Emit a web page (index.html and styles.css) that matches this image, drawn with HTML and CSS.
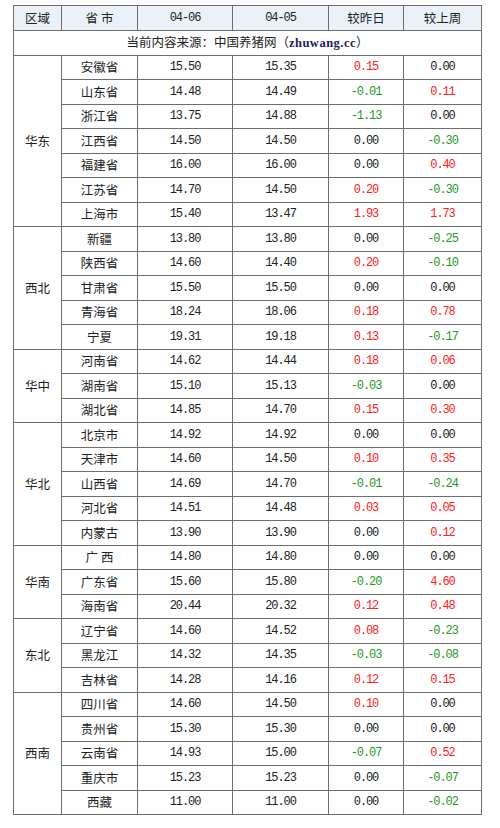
FILE: index.html
```html
<!DOCTYPE html>
<html lang="zh">
<head>
<meta charset="utf-8">
<link rel="stylesheet" href="styles.css">
</head>
<body>
<table class="price">
  <colgroup>
    <col class="c-region"><col class="c-prov"><col class="c-d1"><col class="c-d2"><col class="c-day"><col class="c-week">
  </colgroup>
  <thead>
    <tr class="head">
      <th class="zh">区域</th><th class="zh">省 市</th><th class="num">04-06</th><th class="num">04-05</th><th class="zh">较昨日</th><th class="zh">较上周</th>
    </tr>
  </thead>
  <tbody>
    <tr><td colspan="6" class="source zh">当前内容来源：中国养猪网（<b class="site">zhuwang.cc</b>）</td></tr>

    <tr><td rowspan="7" class="zh region">华东</td><td class="zh">安徽省</td><td class="num">15.50</td><td class="num">15.35</td><td class="num up">0.15</td><td class="num">0.00</td></tr>
    <tr><td class="zh">山东省</td><td class="num">14.48</td><td class="num">14.49</td><td class="num dn">-0.01</td><td class="num up">0.11</td></tr>
    <tr><td class="zh">浙江省</td><td class="num">13.75</td><td class="num">14.88</td><td class="num dn">-1.13</td><td class="num">0.00</td></tr>
    <tr><td class="zh">江西省</td><td class="num">14.50</td><td class="num">14.50</td><td class="num">0.00</td><td class="num dn">-0.30</td></tr>
    <tr><td class="zh">福建省</td><td class="num">16.00</td><td class="num">16.00</td><td class="num">0.00</td><td class="num up">0.40</td></tr>
    <tr><td class="zh">江苏省</td><td class="num">14.70</td><td class="num">14.50</td><td class="num up">0.20</td><td class="num dn">-0.30</td></tr>
    <tr><td class="zh">上海市</td><td class="num">15.40</td><td class="num">13.47</td><td class="num up">1.93</td><td class="num up">1.73</td></tr>

    <tr><td rowspan="5" class="zh region">西北</td><td class="zh">新疆</td><td class="num">13.80</td><td class="num">13.80</td><td class="num">0.00</td><td class="num dn">-0.25</td></tr>
    <tr><td class="zh">陕西省</td><td class="num">14.60</td><td class="num">14.40</td><td class="num up">0.20</td><td class="num dn">-0.10</td></tr>
    <tr><td class="zh">甘肃省</td><td class="num">15.50</td><td class="num">15.50</td><td class="num">0.00</td><td class="num">0.00</td></tr>
    <tr><td class="zh">青海省</td><td class="num">18.24</td><td class="num">18.06</td><td class="num up">0.18</td><td class="num up">0.78</td></tr>
    <tr><td class="zh">宁夏</td><td class="num">19.31</td><td class="num">19.18</td><td class="num up">0.13</td><td class="num dn">-0.17</td></tr>

    <tr><td rowspan="3" class="zh region">华中</td><td class="zh">河南省</td><td class="num">14.62</td><td class="num">14.44</td><td class="num up">0.18</td><td class="num up">0.06</td></tr>
    <tr><td class="zh">湖南省</td><td class="num">15.10</td><td class="num">15.13</td><td class="num dn">-0.03</td><td class="num">0.00</td></tr>
    <tr><td class="zh">湖北省</td><td class="num">14.85</td><td class="num">14.70</td><td class="num up">0.15</td><td class="num up">0.30</td></tr>

    <tr><td rowspan="5" class="zh region">华北</td><td class="zh">北京市</td><td class="num">14.92</td><td class="num">14.92</td><td class="num">0.00</td><td class="num">0.00</td></tr>
    <tr><td class="zh">天津市</td><td class="num">14.60</td><td class="num">14.50</td><td class="num up">0.10</td><td class="num up">0.35</td></tr>
    <tr><td class="zh">山西省</td><td class="num">14.69</td><td class="num">14.70</td><td class="num dn">-0.01</td><td class="num dn">-0.24</td></tr>
    <tr><td class="zh">河北省</td><td class="num">14.51</td><td class="num">14.48</td><td class="num up">0.03</td><td class="num up">0.05</td></tr>
    <tr><td class="zh">内蒙古</td><td class="num">13.90</td><td class="num">13.90</td><td class="num">0.00</td><td class="num up">0.12</td></tr>

    <tr><td rowspan="3" class="zh region">华南</td><td class="zh">广 西</td><td class="num">14.80</td><td class="num">14.80</td><td class="num">0.00</td><td class="num">0.00</td></tr>
    <tr><td class="zh">广东省</td><td class="num">15.60</td><td class="num">15.80</td><td class="num dn">-0.20</td><td class="num up">4.60</td></tr>
    <tr><td class="zh">海南省</td><td class="num">20.44</td><td class="num">20.32</td><td class="num up">0.12</td><td class="num up">0.48</td></tr>

    <tr><td rowspan="3" class="zh region">东北</td><td class="zh">辽宁省</td><td class="num">14.60</td><td class="num">14.52</td><td class="num up">0.08</td><td class="num dn">-0.23</td></tr>
    <tr><td class="zh">黑龙江</td><td class="num">14.32</td><td class="num">14.35</td><td class="num dn">-0.03</td><td class="num dn">-0.08</td></tr>
    <tr><td class="zh">吉林省</td><td class="num">14.28</td><td class="num">14.16</td><td class="num up">0.12</td><td class="num up">0.15</td></tr>

    <tr><td rowspan="5" class="zh region">西南</td><td class="zh">四川省</td><td class="num">14.60</td><td class="num">14.50</td><td class="num up">0.10</td><td class="num">0.00</td></tr>
    <tr><td class="zh">贵州省</td><td class="num">15.30</td><td class="num">15.30</td><td class="num">0.00</td><td class="num">0.00</td></tr>
    <tr><td class="zh">云南省</td><td class="num">14.93</td><td class="num">15.00</td><td class="num dn">-0.07</td><td class="num up">0.52</td></tr>
    <tr><td class="zh">重庆市</td><td class="num">15.23</td><td class="num">15.23</td><td class="num">0.00</td><td class="num dn">-0.07</td></tr>
    <tr><td class="zh">西藏</td><td class="num">11.00</td><td class="num">11.00</td><td class="num">0.00</td><td class="num dn">-0.02</td></tr>
  </tbody>
</table>
</body>
</html>
```

FILE: styles.css
```css
html, body {
  margin: 0;
  padding: 0;
  background: #ffffff;
}
body {
  padding: 5px 0 0 13px;
}
.price {
  border-collapse: collapse;
  table-layout: fixed;
  width: 469px;
  color: #222222;
}
.c-region { width: 48px; }
.c-prov { width: 76px; }
.c-d1 { width: 95px; }
.c-d2 { width: 96px; }
.c-day { width: 75px; }
.c-week { width: 78px; }

.price th,
.price td {
  border: 1px solid #6e6e6e;
  padding: 0;
  height: 23.5px;
  text-align: center;
  vertical-align: middle;
  font-weight: normal;
  white-space: nowrap;
  line-height: 14px;
}
.head th {
  background: #eaf1f8;
  height: 24px;
}
.zh {
  font-family: "Noto Sans CJK SC", "Noto Sans", sans-serif;
  font-size: 12.5px;
}
.num {
  font-family: "Liberation Mono", "DejaVu Sans Mono", monospace;
  font-size: 12px;
  letter-spacing: -1.1px;
}
.source {
  text-align: center;
  padding-right: 12px;
}
.site {
  font-family: "Liberation Serif", serif;
  font-weight: bold;
  font-size: 12.5px;
  color: #1c1c5e;
  letter-spacing: 0.5px;
}
.region {
  color: #222222;
}
.up { color: #ff2020; }
.dn { color: #1f9a1f; }
```
